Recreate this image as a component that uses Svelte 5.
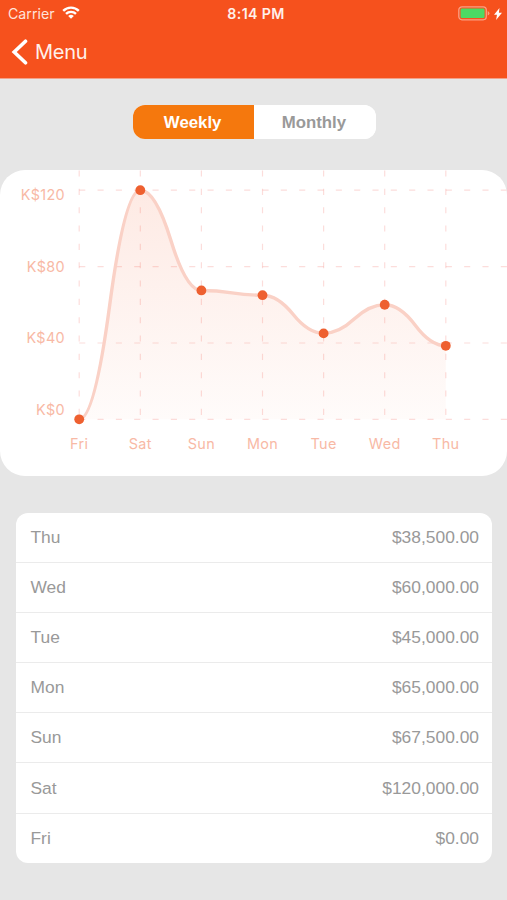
<script>
    let period = 'Weekly';
    const periods = ['Weekly', 'Monthly'];

    const sales = [
        {day: 'Fri', amount: 0},
        {day: 'Sat', amount: 120000},
        {day: 'Sun', amount: 67500},
        {day: 'Mon', amount: 65000},
        {day: 'Tue', amount: 45000},
        {day: 'Wed', amount: 60000},
        {day: 'Thu', amount: 38500}
    ];
    const rows = [...sales].reverse();

    /* Chart geometry */
    const left = 79.2;
    const step = 61.1;
    const top = 20.2;
    const bottom = 249.3;
    const ticks = [120, 80, 40, 0];

    const points = sales.map((s, i) => ({
        day: s.day,
        x: left + i * step,
        y: bottom - (s.amount / 120000) * (bottom - top)
    }));

    // two quadratic halves between each pair of points
    let line = `M${points[0].x},${points[0].y}`;
    for (let i = 1; i < points.length; i++) {
        const a = points[i - 1];
        const b = points[i];
        const mx = (a.x + b.x) / 2;
        const my = (a.y + b.y) / 2;
        line += ` Q${(a.x + mx) / 2},${a.y} ${mx},${my} Q${(b.x + mx) / 2},${b.y} ${b.x},${b.y}`;
    }
    const area = `${line} L${points[6].x},${bottom} L${left},${bottom} Z`;

    function money(value) {
        return '$' + value.toLocaleString('en-US', {minimumFractionDigits: 2});
    }
</script>

<div class="screen">
    <header>
        <div class="status">
            <div class="carrier">
                <span>Carrier</span>
                <svg width="18" height="13" viewBox="0 0 18 13" fill="none" stroke="#fff" stroke-width="2.4">
                    <path d="M1.2 4.9a11 11 0 0 1 15.6 0" />
                    <path d="M4 7.9a7.1 7.1 0 0 1 10 0" />
                    <path d="M9 12.8L6.2 10a4 4 0 0 1 5.6 0z" fill="#fff" stroke="none" />
                </svg>
            </div>
            <span class="time">8:14 PM</span>
            <div class="power">
                <svg width="32" height="15" viewBox="0 0 32 15">
                    <rect x="0.8" y="0.8" width="27.5" height="13" rx="3.2" fill="none" stroke="#fff" stroke-opacity="0.45" stroke-width="1.3" />
                    <rect x="2.6" y="2.6" width="24" height="9.5" rx="1.4" fill="#4cd964" />
                    <path d="M29.7 5v4.6q1.7-.7 1.7-2.3T29.7 5z" fill="#fff" fill-opacity="0.45" />
                </svg>
                <svg width="8" height="12" viewBox="0 0 8 12">
                    <path d="M5.5 0L0 6.8h3L2.1 12 8 4.8H4.9z" fill="#fff" />
                </svg>
            </div>
        </div>
        <div class="nav">
            <svg width="17" height="26" viewBox="0 0 17 26" fill="none" stroke="#fff" stroke-width="3.6" stroke-linecap="round">
                <path d="M14.5 2.2L3.2 13l11.3 10.8" />
            </svg>
            <span>Menu</span>
        </div>
    </header>

    <div class="tabs">
        {#each periods as p}
            <button class:active={period === p} on:click={() => (period = p)}>{p}</button>
        {/each}
    </div>

    <div class="chart">
        <svg width="507" height="306" viewBox="0 0 507 306">
            <defs>
                <linearGradient id="fill" gradientUnits="userSpaceOnUse" x1="0" y1="0" x2="0" y2="265">
                    <stop offset="0" stop-color="#f4511e" stop-opacity="0.13" />
                    <stop offset="1" stop-color="#f4511e" stop-opacity="0.015" />
                </linearGradient>
            </defs>
            {#each ticks as tick, i}
                <line class="grid" x1={left} x2="507" y1={top + i * 76.4} y2={top + i * 76.4} />
                <text class="label" x="65" y={30 + i * 71.5} text-anchor="end">K${tick}</text>
            {/each}
            {#each points as p}
                <line class="grid" x1={p.x} x2={p.x} y1="0.5" y2={bottom} />
                <text class="label" x={p.x} y="278.6" text-anchor="middle">{p.day}</text>
            {/each}
            <path d={area} fill="url(#fill)" />
            <path d={line} fill="none" stroke="#fad1c6" stroke-width="3.4" />
            {#each points as p}
                <circle cx={p.x} cy={p.y} r="4.9" fill="#ee6030" />
            {/each}
        </svg>
    </div>

    <ul class="list">
        {#each rows as row}
            <li>
                <span>{row.day}</span>
                <span>{money(row.amount)}</span>
            </li>
        {/each}
    </ul>
</div>

<style>
    :global(body) {
        margin: 0;
        background: #e6e6e6;
    }
    .screen {
        width: 507px;
        height: 900px;
        overflow: hidden;
        background: #e6e6e6;
        font-family: "Liberation Sans", Arial, sans-serif;
    }
    header {
        height: 78px;
        background: #f6511d;
        border-bottom: 1px solid #f2a189;
        color: #fff;
        font-family: Inter, sans-serif;
    }
    .status {
        display: grid;
        grid-template-columns: 1fr auto 1fr;
        align-items: center;
        height: 27px;
        padding: 0 5px 0 8px;
        font-size: 14.2px;
        color: #ffe3da;
    }
    .carrier {
        display: flex;
        align-items: center;
        gap: 7px;
    }
    .carrier svg {
        margin-top: -2px;
    }
    .time {
        margin-left: 2px;
        font-weight: 600;
        font-size: 14.2px;
        letter-spacing: 0.35px;
        color: #fff0ea;
    }
    .power {
        display: flex;
        justify-content: flex-end;
        align-items: center;
        gap: 4px;
    }
    .nav {
        display: flex;
        align-items: center;
        gap: 7px;
        height: 50px;
        padding-left: 11px;
        font-size: 20px;
        letter-spacing: -0.3px;
        color: #fff0ea;
    }
    .tabs {
        display: flex;
        width: 242.5px;
        height: 34px;
        margin: 26px auto 31px 133px;
        border-radius: 12px;
        overflow: hidden;
        background: #fff;
    }
    button {
        flex: 1;
        padding: 1px 2px 0 0;
        border: 0;
        background: #fff;
        color: #999;
        font-family: inherit;
        font-size: 16.8px;
        font-weight: bold;
    }
    button.active {
        background: #f5780d;
        color: #fff;
    }
    .chart {
        height: 306px;
        border-radius: 25px;
        overflow: hidden;
        background: #fff;
    }
    .chart svg {
        display: block;
    }
    .grid {
        stroke: #f0625a;
        stroke-opacity: 0.22;
        stroke-width: 1.2;
        stroke-dasharray: 6.1 12.23;
    }
    .label {
        fill: #f8b9a5;
        font-family: Inter, sans-serif;
        font-size: 14.4px;
        letter-spacing: 0.35px;
    }
    .list {
        margin: 37px 15px 0 16px;
        padding: 0;
        list-style: none;
        border-radius: 12px;
        overflow: hidden;
        background: #fff;
    }
    li {
        display: flex;
        justify-content: space-between;
        align-items: center;
        box-sizing: border-box;
        height: 50.1px;
        padding: 0 13px 0 14.5px;
        border-bottom: 1px solid #ebebeb;
        color: #999;
        font-size: 17.4px;
    }
    li:last-child {
        height: 49px;
        border-bottom: 0;
    }
</style>
